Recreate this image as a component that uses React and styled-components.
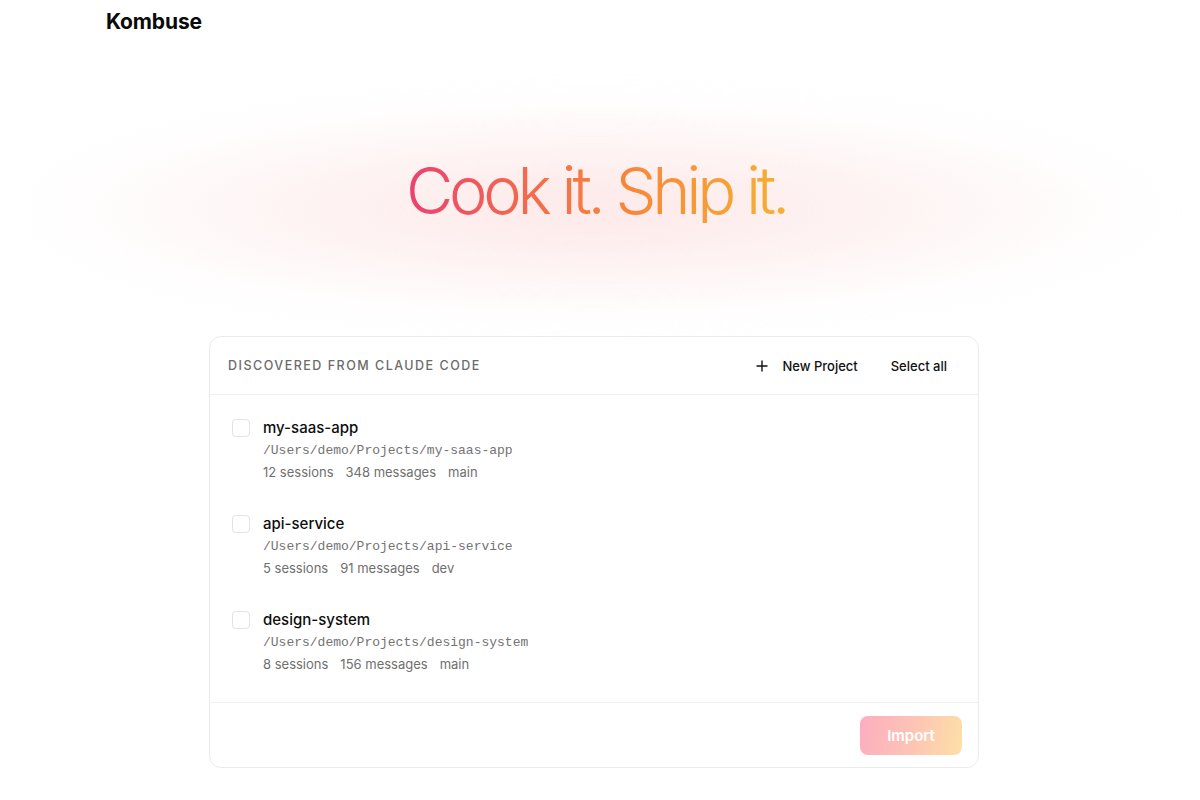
import React from "react";
import styled, { createGlobalStyle } from "styled-components";

const Global = createGlobalStyle`
  html, body { margin: 0; padding: 0; background: #ffffff; }
  body { font-family: Inter, "Noto Sans", sans-serif; color: #111; -webkit-font-smoothing: antialiased; }
  #root { width: 1188px; }
`;

const Page = styled.div`
  position: relative;
  min-height: 800px;
  overflow: hidden;
`;

const TopBar = styled.header`
  max-width: 976px;
  margin: 0 auto;
  height: 42px;
  display: flex;
  align-items: center;
`;

const Logo = styled.div`
  font-family: Inter, "Liberation Sans", sans-serif;
  font-weight: 700;
  font-size: 21px;
  letter-spacing: -0.15px;
  color: #0a0a0a;
`;

const Hero = styled.section`
  position: relative;
  height: 294px;
  display: flex;
  align-items: center;
  justify-content: center;
`;

const Glow = styled.div`
  position: absolute;
  left: 20px;
  right: 20px;
  top: 55px;
  bottom: 15px;
  border-radius: 50%;
  background: radial-gradient(ellipse at center, rgba(253, 222, 222, 0.7) 0%, rgba(253, 230, 230, 0.5) 35%, rgba(255, 240, 240, 0.22) 60%, rgba(255, 255, 255, 0) 72%);
  filter: blur(18px);
`;

const Headline = styled.h1`
  position: relative;
  margin: 0;
  margin-top: 2px;
  padding-left: 4px;
  font-family: Inter, "Liberation Sans", sans-serif;
  font-weight: 300;
  font-size: 65px;
  letter-spacing: -4.3px;
  line-height: 1;
  background: linear-gradient(90deg, #ea3f72 0%, #f2674f 30%, #f7883a 60%, #f5b132 100%);
  -webkit-background-clip: text;
  background-clip: text;
  color: transparent;
`;

const Card = styled.section`
  width: 770px;
  margin: 0 auto;
  border: 1px solid #ebebeb;
  border-radius: 12px;
  background: #fff;
  box-sizing: border-box;
`;

const CardHeader = styled.div`
  height: 57px;
  display: flex;
  align-items: center;
  justify-content: space-between;
  padding: 0 19px 0 18px;
  border-bottom: 1px solid #f0f0f0;
`;

const Label = styled.div`
  font-size: 12.5px;
  font-weight: 500;
  letter-spacing: 1.5px;
  color: #6b6b6b;
  text-transform: uppercase;
`;

const Actions = styled.div`
  display: flex;
  align-items: center;
  gap: 9px;
`;

const GhostButton = styled.button`
  display: flex;
  align-items: center;
  gap: 14px;
  background: none;
  border: none;
  padding: 8px 12px;
  font-family: Inter, sans-serif;
  font-size: 13px;
  font-weight: 500;
  color: #111;
  cursor: pointer;
`;

const List = styled.div`
  padding: 8px 0 11px;
`;

const Row = styled.div`
  display: flex;
  align-items: flex-start;
  gap: 13px;
  padding: 15px 22px;
  height: 66px;
`;

const Check = styled.span`
  width: 16px;
  height: 16px;
  margin-top: 1px;
  border: 1px solid #e3e3e3;
  border-radius: 4px;
  background: #fff;
  flex: none;
`;

const Info = styled.div`
  display: flex;
  flex-direction: column;
  margin-top: -1px;
`;

const Name = styled.div`
  font-size: 15px;
  font-weight: 500;
  line-height: 22px;
  color: #0d0d0d;
`;

const Path = styled.div`
  font-family: "Liberation Mono", "DejaVu Sans Mono", monospace;
  font-size: 13px;
  line-height: 22px;
  margin-top: 1px;
  margin-bottom: -1px;
  color: #737373;
`;

const Meta = styled.div`
  display: flex;
  gap: 12px;
  font-size: 13px;
  line-height: 22px;
  color: #6f6f6f;
`;

const Footer = styled.div`
  border-top: 1px solid #f0f0f0;
  display: flex;
  justify-content: flex-end;
  padding: 13px 16px 12px;
`;

const ImportButton = styled.button`
  width: 102px;
  height: 39px;
  border: none;
  border-radius: 8px;
  background: linear-gradient(100deg, #fdadc0 0%, #fdc3b5 50%, #fde0a6 100%);
  color: #fff;
  font-family: Inter, sans-serif;
  font-size: 15px;
  font-weight: 600;
  cursor: default;
`;

const projects = [
  { name: "my-saas-app", path: "/Users/demo/Projects/my-saas-app", sessions: "12 sessions", messages: "348 messages", branch: "main" },
  { name: "api-service", path: "/Users/demo/Projects/api-service", sessions: "5 sessions", messages: "91 messages", branch: "dev" },
  { name: "design-system", path: "/Users/demo/Projects/design-system", sessions: "8 sessions", messages: "156 messages", branch: "main" },
];

const Plus = () => (
  <svg width="12" height="12" viewBox="0 0 12 12" fill="none" stroke="#111" strokeWidth="1.4" strokeLinecap="round">
    <path d="M6 1v10M1 6h10" />
  </svg>
);

export default function App() {
  return (
    <Page>
      <Global />
      <TopBar>
        <Logo>Kombuse</Logo>
      </TopBar>
      <Hero>
        <Glow />
        <Headline>Cook it. Ship it.</Headline>
      </Hero>
      <Card>
        <CardHeader>
          <Label>Discovered from Claude Code</Label>
          <Actions>
            <GhostButton><Plus />New Project</GhostButton>
            <GhostButton>Select all</GhostButton>
          </Actions>
        </CardHeader>
        <List>
          {projects.map((p) => (
            <Row key={p.name}>
              <Check />
              <Info>
                <Name>{p.name}</Name>
                <Path>{p.path}</Path>
                <Meta>
                  <span>{p.sessions}</span>
                  <span>{p.messages}</span>
                  <span>{p.branch}</span>
                </Meta>
              </Info>
            </Row>
          ))}
        </List>
        <Footer>
          <ImportButton>Import</ImportButton>
        </Footer>
      </Card>
    </Page>
  );
}
